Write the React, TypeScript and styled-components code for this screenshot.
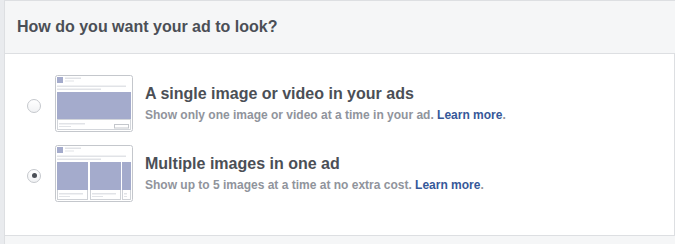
import React from "react";
import styled, { createGlobalStyle } from "styled-components";

const Global = createGlobalStyle`
  html, body { margin: 0; padding: 0; }
  body {
    background: #e9ebee;
    font-family: "Liberation Sans", Arial, Helvetica, sans-serif;
    -webkit-font-smoothing: antialiased;
  }
`;

const Page = styled.div`
  margin-left: 4px;
  border-left: 1px solid #dddfe2;
  border-top: 1px solid #dddfe2;
  height: 243px;
  display: flex;
  flex-direction: column;
  background: #f5f6f7;
`;

const Header = styled.div`
  height: 52px;
  display: flex;
  align-items: center;
  padding-left: 12px;
  background: #f5f6f7;
  border-bottom: 1px solid #dddfe2;
`;

const Title = styled.h2`
  margin: 0;
  font-size: 16px;
  font-weight: bold;
  color: #4b4f56;
  line-height: 20px;
`;

const Body = styled.div`
  background: #fff;
  border-right: 1px solid #dddfe2;
  border-bottom: 1px solid #dddfe2;
  padding: 21px 0 0 22px;
  height: 160px;
  display: flex;
  flex-direction: column;
  gap: 13px;
`;

const Option = styled.label`
  display: flex;
  align-items: center;
  height: 57px;
  cursor: pointer;
`;

const Radio = styled.span<{ $checked?: boolean }>`
  box-sizing: border-box;
  width: 14px;
  height: 14px;
  border-radius: 50%;
  border: 1px solid #c5c8cd;
  background: linear-gradient(#ffffff, #f1f2f4);
  display: flex;
  align-items: center;
  justify-content: center;
  margin-top: 4px;
  margin-right: 14px;
  flex: none;
  &::after {
    content: "";
    display: ${(p) => (p.$checked ? "block" : "none")};
    width: 5px;
    height: 5px;
    border-radius: 50%;
    background: #4b4f56;
  }
`;

const Thumb = styled.svg`
  flex: none;
  display: block;
  margin-right: 12px;
`;

const TextBlock = styled.div`
  display: flex;
  flex-direction: column;
`;

const OptionTitle = styled.div`
  font-size: 16px;
  font-weight: bold;
  color: #4b4f56;
  line-height: 20px;
`;

const OptionDesc = styled.div`
  font-size: 12px;
  font-weight: bold;
  color: #90949c;
  line-height: 16px;
  margin-top: 3px;
`;

const Link = styled.a`
  color: #365899;
  text-decoration: none;
`;

const IMG = "#a4abcc";
const LINE = "#e1e3e7";
const BORDER = "#c4c7cc";

const Frame: React.FC<{ children: React.ReactNode }> = ({ children }) => (
  <Thumb width="78" height="57" viewBox="0 0 78 57">
    <rect x="0.5" y="0.5" width="77" height="56" rx="2" fill="#fff" stroke={BORDER} />
    <rect x="2" y="2" width="6" height="6" fill={IMG} />
    <rect x="10" y="2.5" width="16" height="1.5" fill={LINE} />
    <rect x="10" y="5.5" width="9" height="1" fill={LINE} />
    <rect x="2" y="10.5" width="69" height="1.5" fill={LINE} />
    <rect x="2" y="13.5" width="44" height="1.5" fill={LINE} />
    {children}
  </Thumb>
);

const SingleThumb = () => (
  <Frame>
    <rect x="2" y="17" width="74" height="28" fill={IMG} />
    <rect x="2.5" y="44.5" width="73" height="10" fill="#fff" stroke="#d3d6db" />
    <rect x="4" y="48" width="26" height="1.5" fill={LINE} />
    <rect x="4" y="51" width="12" height="1" fill={LINE} />
    <rect x="59.5" y="49.5" width="14" height="3.5" fill="#fff" stroke={BORDER} />
  </Frame>
);

const Card: React.FC<{ x: number; w: number }> = ({ x, w }) => (
  <g>
    <rect x={x + 0.5} y="17.5" width={w - 1} height="37" fill="#fff" stroke="#cfd2d7" />
    <rect x={x} y="17" width={w} height="28" fill={IMG} />
    <rect x={x + 2} y="48" width={Math.min(w - 6, 24)} height="1.5" fill={LINE} />
    <rect x={x + 2} y="51" width={Math.min(w - 6, 11)} height="1" fill={LINE} />
  </g>
);

const MultiThumb = () => (
  <Frame>
    <Card x={2} w={31} />
    <Card x={35} w={31} />
    <Card x={67} w={9} />
  </Frame>
);

export default function App() {
  return (
    <>
      <Global />
      <Page>
        <Header>
          <Title>How do you want your ad to look?</Title>
        </Header>
        <Body>
          <Option>
            <Radio />
            <SingleThumb />
            <TextBlock>
              <OptionTitle>A single image or video in your ads</OptionTitle>
              <OptionDesc>
                Show only one image or video at a time in your ad. <Link href="#">Learn more</Link>.
              </OptionDesc>
            </TextBlock>
          </Option>
          <Option>
            <Radio $checked />
            <MultiThumb />
            <TextBlock>
              <OptionTitle>Multiple images in one ad</OptionTitle>
              <OptionDesc>
                Show up to 5 images at a time at no extra cost. <Link href="#">Learn more</Link>.
              </OptionDesc>
            </TextBlock>
          </Option>
        </Body>
      </Page>
    </>
  );
}
